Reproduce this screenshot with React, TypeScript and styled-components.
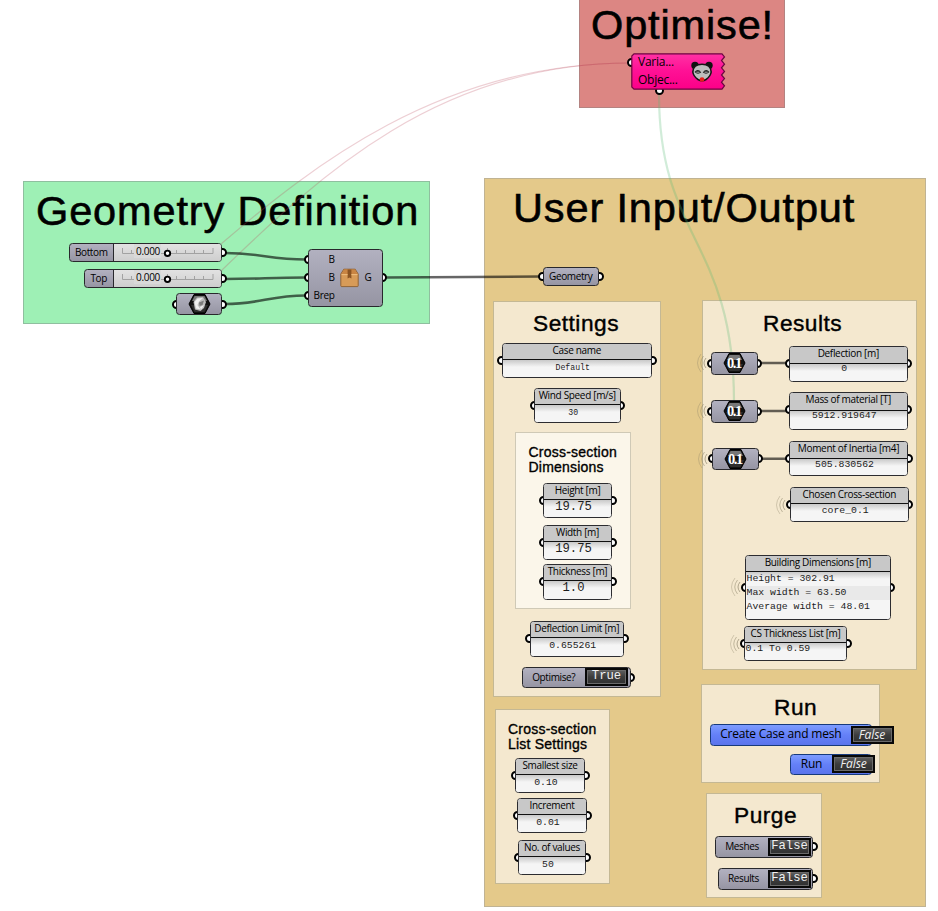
import React from "react";
import styled, { createGlobalStyle, css } from "styled-components";

const GlobalStyle = createGlobalStyle`
  body { margin: 0; background: #fff; overflow: hidden; }
  * { box-sizing: border-box; }
`;

const UI = `"Open Sans", "Noto Sans", sans-serif`;
const MONO = `"Liberation Mono", monospace`;

interface Box { $x: number; $y: number; $w: number; $h: number }
const placed = css<Box>`
  position: absolute;
  left: ${p => p.$x}px;
  top: ${p => p.$y}px;
  width: ${p => p.$w}px;
  height: ${p => p.$h}px;
`;

const Canvas = styled.main`
  position: relative;
  width: 938px;
  height: 911px;
  overflow: hidden;
  background: #fff;
  color: #000;
`;

const Group = styled.section<Box & { $fill: string; $edge: string; $pt: number; $pl: number }>`
  ${placed}
  background: ${p => p.$fill};
  border: 1px solid ${p => p.$edge};
  padding: ${p => p.$pt}px 0 0 ${p => p.$pl}px;
`;

const Heading = styled.h1<{ $gap?: number }>`
  margin: 0;
  font: 400 41.5px/48px "Liberation Sans", Arial, sans-serif;
  letter-spacing: ${p => p.$gap ?? 0.86}px;
  -webkit-text-stroke: 0.6px #000;
  white-space: nowrap;
`;
const SubHeading = styled.h2`
  margin: 0;
  font: 400 22.7px/26px "Liberation Sans", Arial, sans-serif;
  letter-spacing: 0.5px;
  -webkit-text-stroke: 0.4px #000;
  white-space: nowrap;
`;
const SmallHeading = styled.h3`
  margin: 0;
  font: 400 14px/15.3px "Liberation Sans", Arial, sans-serif;
  letter-spacing: 0.22px;
  -webkit-text-stroke: 0.35px #000;
  white-space: pre;
`;

const Wires = styled.svg`
  position: absolute;
  inset: 0;
  pointer-events: none;
`;

const NodeFrame = styled.div<Box>`
  ${placed}
  isolation: isolate;
`;
const Grip = styled.i<{ $side: "left" | "right" | "bottom"; $at: number }>`
  position: absolute;
  z-index: -1;
  width: 9px;
  height: 9px;
  border: 2px solid #000;
  border-radius: 50%;
  background: #fff;
  ${p => p.$side === "bottom"
    ? css`bottom: -4.5px; left: ${p.$at - 4.5}px;`
    : css`top: ${p.$at - 4.5}px; ${p.$side}: -4.5px;`}
`;
const WaveMark = styled.svg<{ $at: number }>`
  position: absolute;
  left: -15px;
  top: ${p => p.$at - 10}px;
  width: 12px;
  height: 20px;
`;
const Waves = ({ at }: { at: number }) => (
  <WaveMark $at={at} viewBox="0 0 12 20" fill="none" stroke="#8a8168" strokeWidth="1">
    <path d="M5 1Q-2 10 5 19" opacity=".35" />
    <path d="M7.5 3Q2 10 7.5 17" opacity=".5" />
    <path d="M10 5Q6 10 10 15" opacity=".65" />
  </WaveMark>
);

const PanelBody = styled.div`
  height: 100%;
  display: flex;
  flex-direction: column;
  border: 1.5px solid #2c2c30;
  border-radius: 3.5px;
  background: #f5f5f5;
  overflow: hidden;
`;
const PanelTitle = styled.div<{ $h: number }>`
  flex: none;
  height: ${p => p.$h}px;
  display: flex;
  justify-content: center;
  background: #c8c8c8;
  border-bottom: 1.5px solid #111;
  font: 400 10px/12.5px ${UI};
  letter-spacing: -0.33px;
  white-space: nowrap;
`;
const PanelValue = styled.div<{ $size: number; $left?: boolean; $row: number }>`
  flex: 1;
  padding: ${p => (p.$left ? "0 0 0 0.5px" : "0 8px 0 0")};
  background: linear-gradient(#c9c9c9, #f5f5f5 7px);
  color: #1c1c1c;
  font: 400 ${p => p.$size}px/${p => p.$row}px ${MONO};
  text-align: ${p => (p.$left ? "left" : "center")};
  white-space: pre;
`;
const PanelLine = styled.div<{ $shade: boolean }>`
  height: 14.2px;
  line-height: 14px;
  background: ${p => (p.$shade ? "#e9e9e9" : "transparent")};
`;

interface PanelProps {
  x: number; y: number; w: number; h: number; title: string; lines: string[];
  head?: number; row?: number; size?: number; left?: boolean; waves?: boolean;
}
const Panel = ({ x, y, w, h, title, lines, head = 16, row = 16, size = 9.8, left, waves }: PanelProps) => {
  const at = h > 50 ? h / 2 : 17.5;
  return (
    <NodeFrame $x={x} $y={y} $w={w} $h={h}>
      {waves && <Waves at={at} />}
      <Grip $side="left" $at={at} />
      <Grip $side="right" $at={at} />
      <PanelBody>
        <PanelTitle $h={head}>{title}</PanelTitle>
        <PanelValue $size={size} $left={left} $row={row}>
          {lines.length > 1
            ? lines.map((l, i) => <PanelLine key={l} $shade={i % 2 === 1}>{l}</PanelLine>)
            : lines[0]}
        </PanelValue>
      </PanelBody>
    </NodeFrame>
  );
};

const Capsule = styled.div<{ $blue?: boolean; $center?: boolean }>`
  height: 100%;
  display: flex;
  align-items: center;
  justify-content: ${p => (p.$center ? "center" : "flex-start")};
  border: 1.5px solid ${p => (p.$blue ? "#173a7c" : "#28282c")};
  border-radius: 3.5px;
  background: ${p => (p.$blue ? "linear-gradient(#7e9cff, #6480f8 50%, #5b74ec)" : "linear-gradient(#b2b1c0, #9695a3)")};
  font: 400 10px/14px ${UI};
  letter-spacing: -0.35px;
  white-space: nowrap;
`;
const Caption = styled.span<{ $w: number; $size?: number }>`
  flex: none;
  width: ${p => p.$w}px;
  padding-bottom: 1.5px;
  text-align: center;
  font-size: ${p => p.$size ?? 10}px;
  letter-spacing: ${p => (p.$size ? -0.2 : -0.38)}px;
`;
const Value = styled.span<{ $italic?: boolean }>`
  flex: none;
  width: 43px;
  height: 18px;
  border: 2px solid #080808;
  box-shadow: inset 0 0 0 1px #6a6a6a;
  background: linear-gradient(#606060, #3c3c3c 50%, #303030);
  color: #f0f0f0;
  text-align: center;
  letter-spacing: 0;
  font: ${p => (p.$italic ? `italic 400 12px/13px ${UI}` : `400 12.2px/13.5px ${MONO}`)};
`;

interface ToggleProps {
  x: number; y: number; w: number; label: string; labelW: number; value: string;
  blue?: boolean; size?: number; grip?: boolean;
}
const Toggle = ({ x, y, w, label, labelW, value, blue, size, grip }: ToggleProps) => (
  <NodeFrame $x={x} $y={y} $w={w} $h={21.5}>
    {grip && <Grip $side="right" $at={10.5} />}
    <Capsule $blue={blue}>
      <Caption $w={labelW} $size={size}>{label}</Caption>
      <Value $italic={blue}>{value}</Value>
    </Capsule>
  </NodeFrame>
);

const HexBody = () => (
  <>
    <path d="M6 1.5H17L22 11L17 20.5H6L1 11Z" fill="#111" stroke="#000" />
    <path d="M6.5 3H16.5L19 8H4Z" fill="#777" />
    <path d="M3 12H20L16.5 19H6.5Z" fill="#2e2e2e" />
  </>
);
const HexText = styled.text`
  font: 700 14.5px "Liberation Serif", serif;
  letter-spacing: -1.4px;
  fill: #fff;
`;
const NumberNode = ({ x, y }: { x: number; y: number }) => (
  <NodeFrame $x={x} $y={y} $w={46.5} $h={22.5}>
    <Waves at={11} />
    <Grip $side="left" $at={11} />
    <Grip $side="right" $at={11} />
    <Capsule $center>
      <svg width="23" height="22" viewBox="0 0 23 22">
        <HexBody />
        <HexText x="4" y="16">0.1</HexText>
      </svg>
    </Capsule>
  </NodeFrame>
);
const BrepNode = () => (
  <NodeFrame $x={176} $y={292.5} $w={46} $h={22.5}>
    <Grip $side="left" $at={11.5} />
    <Grip $side="right" $at={11.5} />
    <Capsule $center>
      <svg width="23" height="22" viewBox="0 0 23 22">
        <HexBody />
        <path d="M5.5 9L9 4.5L15 4L18 9L16 15L12.5 18L7 16.5Z" fill="#bdbdbd" />
        <path d="M6.5 9L9.5 5.5L15 5L11 8.5L9.5 12L12.5 16.5L8 15.5Z" fill="#f0f0f0" />
        <path d="M11 9.5L16 7.5L14.5 12L11.5 13Z" fill="#7c7c7c" />
        <path d="M12 14L16 12L13 16.5Z" fill="#efefef" />
      </svg>
    </Capsule>
  </NodeFrame>
);

const Track = styled.div`
  flex: 1;
  height: 100%;
  position: relative;
  border-left: 1.5px solid #28282c;
  border-radius: 0 2px 2px 0;
  background: linear-gradient(#e2e2e2, #cecece);
`;
const Reading = styled.span`
  position: absolute;
  left: 20.5px;
  top: 0;
  padding: 0 1px 0 2px;
  background: #d9d9d9;
  letter-spacing: -0.3px;
`;
const Rail = styled.svg`
  position: absolute;
  left: 8px;
  top: 2px;
`;
const Slider = ({ x, y, w, label }: { x: number; y: number; w: number; label: string }) => (
  <NodeFrame $x={x} $y={y} $w={w} $h={19}>
    <Grip $side="right" $at={9.5} />
    <Capsule>
      <Caption $w={w - 110.5}>{label}</Caption>
      <Track>
        <Rail width="92" height="14" viewBox="0 0 92 14" fill="none">
          <path d="M0.5 2V7.5H91V2M9.5 4V7M18.5 4V7M27.5 4V7M36.5 4V7M45.5 2V7M54.5 4V7M63.5 4V7M72.5 4V7M81.5 4V7" stroke="#a2a2a2" />
        </Rail>
        <Reading>0.000</Reading>
        <Rail width="92" height="14" viewBox="0 0 92 14">
          <circle cx="45.5" cy="7.3" r="2.7" fill="#fff" stroke="#000" strokeWidth="1.9" />
        </Rail>
      </Track>
    </Capsule>
  </NodeFrame>
);

const Ports = styled.div<{ $w: number; $row: number }>`
  width: ${p => p.$w}px;
  padding-bottom: 2px;
  display: grid;
  grid-auto-rows: ${p => p.$row}px;
  align-items: center;
  text-align: right;
`;
const OutPort = styled.span`
  padding-bottom: 2px;
`;
const BoxIcon = styled.svg`
  margin: 0 6px 0 5px;
`;
const ClusterNode = () => (
  <NodeFrame $x={308} $y={248.5} $w={74.5} $h={58.5}>
    <Grip $side="left" $at={11} />
    <Grip $side="left" $at={29} />
    <Grip $side="left" $at={47} />
    <Grip $side="right" $at={29} />
    <Capsule>
      <Ports $w={25.5} $row={18}><span>B</span><span>B</span><span>Brep</span></Ports>
      <BoxIcon width="19" height="20" viewBox="0 0 19 20">
        <path d="M.8 6L3.8 1.2H15.2L18.2 6V17.8Q18.2 18.6 17.4 18.6H1.6Q.8 18.6 .8 17.8Z" fill="#d79b58" stroke="#8c5c2c" strokeWidth=".9" />
        <path d="M1.5 6L4.2 1.6H14.8L17.5 6Z" fill="#c98543" />
        <path d="M7.6 1.4H11.4V10.5L9.5 9.4L7.6 10.5Z" fill="#8a5423" />
        <path d="M1.5 6.6H7.6M11.4 6.6H17.5" stroke="#efbd7e" />
      </BoxIcon>
      <OutPort>G</OutPort>
    </Capsule>
  </NodeFrame>
);

const TornShape = styled.svg`
  position: absolute;
  inset: 0;
`;
const Solver = styled.div`
  position: relative;
  height: 100%;
  display: flex;
  align-items: center;
  gap: 12px;
  padding-left: 7px;
`;
const SolverPorts = styled.div`
  width: 41px;
  padding-bottom: 1px;
  display: grid;
  grid-auto-rows: 18px;
  align-items: center;
  font: 400 12px/18px ${UI};
  letter-spacing: -0.25px;
  white-space: nowrap;
`;
const SolverNode = () => (
  <NodeFrame $x={631} $y={53} $w={95} $h={37}>
    <Grip $side="left" $at={9.5} />
    <Grip $side="bottom" $at={28} />
    <TornShape width="95" height="37" viewBox="0 0 95 37">
      <defs>
        <linearGradient id="pink" x2="0" y2="1">
          <stop offset="0" stopColor="#ff32a4" />
          <stop offset=".45" stopColor="#ff1296" />
          <stop offset="1" stopColor="#fb0088" />
        </linearGradient>
      </defs>
      <path d="M3 .8H91L93.5 4L90.5 7.5L93.5 11.2L90.5 14.8L93.5 18.4L90.5 22L93.5 25.6L90.5 29.2L93.5 32.8L91 36.2H3L.8 34V3Z" fill="url(#pink)" stroke="#6d0540" strokeWidth="1.2" />
    </TornShape>
    <Solver>
      <SolverPorts><span>Varia...</span><span>Objec...</span></SolverPorts>
      <svg width="22" height="22" viewBox="0 0 22 22">
        <circle cx="4" cy="4.5" r="3.7" fill="#111" />
        <circle cx="18" cy="4.5" r="3.7" fill="#111" />
        <path d="M1.8 11Q2 3.2 11 3.2Q20 3.2 20.2 11Q19.5 15.5 15 18.5Q11 21 7 18.5Q2.5 15.5 1.8 11Z" fill="#bdbdbd" stroke="#151515" strokeWidth="1.6" />
        <path d="M3.5 11Q7 7 10.3 11.5Q6.5 14 3.5 11ZM18.5 11Q15 7 11.7 11.5Q15.5 14 18.5 11Z" fill="#222" />
        <path d="M5.3 11.2H8.5M13.5 11.2H16.7" stroke="#ccc" strokeWidth=".8" />
        <ellipse cx="11" cy="18.5" rx="2.4" ry="2.2" fill="#e3201b" />
      </svg>
    </Solver>
  </NodeFrame>
);

const GeometryNode = () => (
  <NodeFrame $x={542.5} $y={267} $w={56.5} $h={19}>
    <Grip $side="left" $at={9.5} />
    <Grip $side="right" $at={9.5} />
    <Capsule $center><Caption $w={53}>Geometry</Caption></Capsule>
  </NodeFrame>
);

const CREAM = "#f4e8cf";
const CREAM_EDGE = "#c4b894";

export default function App() {
  return (
    <>
      <GlobalStyle />
      <Canvas>
        <Group $x={579} $y={-4} $w={206} $h={112} $fill="#dc8683" $edge="#b48381" $pt={4} $pl={11}>
          <Heading>Optimise!</Heading>
        </Group>
        <Group $x={23} $y={181} $w={407} $h={143} $fill="#9ef0b5" $edge="#8fbf9f" $pt={5} $pl={12}>
          <Heading>Geometry Definition</Heading>
        </Group>
        <Group $x={484} $y={178} $w={442} $h={729} $fill="#e4c98a" $edge="#c0b393" $pt={5} $pl={28}>
          <Heading>User Input/Output</Heading>
        </Group>
        <Group $x={493} $y={301} $w={168} $h={396} $fill={CREAM} $edge={CREAM_EDGE} $pt={8} $pl={39}>
          <SubHeading>Settings</SubHeading>
        </Group>
        <Group $x={515} $y={432} $w={116} $h={177} $fill="#fbf6ea" $edge="#cfc9b6" $pt={12} $pl={12.5}>
          <SmallHeading>{"Cross-section\nDimensions"}</SmallHeading>
        </Group>
        <Group $x={495} $y={709} $w={115} $h={175} $fill={CREAM} $edge={CREAM_EDGE} $pt={12} $pl={12}>
          <SmallHeading>{"Cross-section\nList Settings"}</SmallHeading>
        </Group>
        <Group $x={702} $y={300} $w={215} $h={370} $fill={CREAM} $edge={CREAM_EDGE} $pt={9} $pl={60}>
          <SubHeading>Results</SubHeading>
        </Group>
        <Group $x={701} $y={684} $w={179} $h={99} $fill={CREAM} $edge={CREAM_EDGE} $pt={9} $pl={72}>
          <SubHeading>Run</SubHeading>
        </Group>
        <Group $x={706} $y={793} $w={116} $h={105} $fill={CREAM} $edge={CREAM_EDGE} $pt={8} $pl={27}>
          <SubHeading>Purge</SubHeading>
        </Group>

        <Wires width="938" height="911" viewBox="0 0 938 911" fill="none">
          <g stroke="rgba(185,70,90,.26)" strokeWidth="1.2">
            <path d="M221 244C310 168 440 63 630 63" />
            <path d="M221 271C320 175 440 63 630 63" />
          </g>
          <path d="M659 94C659 240 734 240 734 402" stroke="rgba(90,185,120,.28)" strokeWidth="2.2" />
          <g stroke="rgba(0,0,0,.6)" strokeWidth="2.6">
            <path d="M225 253C260 253 270 259.5 306 259.5" />
            <path d="M225 279C260 279 270 277.5 306 277.5" />
            <path d="M225 304C260 304 270 295.5 306 295.5" />
            <path d="M385 277.5C450 277.5 480 276.5 541 276.5" />
            <path d="M760 363H787M760 411H787M761 458.7H787" />
          </g>
        </Wires>

        <SolverNode />
        <Slider x={69} y={243} w={153} label="Bottom" />
        <Slider x={84} y={269} w={138} label="Top" />
        <BrepNode />
        <ClusterNode />
        <GeometryNode />

        <Panel x={501.5} y={343} w={150.5} h={35} title="Case name" lines={["Default"]} size={8.2} />
        <Panel x={534} y={388} w={86.5} h={35} title="Wind Speed [m/s]" lines={["30"]} size={8.2} />
        <Panel x={543} y={482.5} w={69} h={35} title="Height [m]" lines={["19.75"]} size={12.2} row={14} />
        <Panel x={543} y={524.5} w={69} h={35.5} title="Width [m]" lines={["19.75"]} size={12.2} row={14.5} />
        <Panel x={543} y={564} w={69} h={35.5} title="Thickness [m]" lines={["1.0"]} size={12.2} row={15} />
        <Panel x={529.5} y={621} w={94.5} h={35.5} title="Deflection Limit [m]" lines={["0.655261"]} />
        <Toggle x={521.5} y={666.5} w={109} label="Optimise?" labelW={62.5} value="True" grip />

        <Panel x={515} y={758} w={70} h={35} title="Smallest size" lines={["0.10"]} />
        <Panel x={517} y={798} w={70} h={35} title="Increment" lines={["0.01"]} />
        <Panel x={518} y={840} w={68} h={35} title="No. of values" lines={["50"]} />

        <NumberNode x={711} y={352} />
        <NumberNode x={711} y={400} />
        <NumberNode x={712} y={447.5} />
        <Panel x={789} y={345.5} w={118.5} h={36} head={17} row={10} title="Deflection [m]" lines={["0"]} />
        <Panel x={789} y={392} w={118.5} h={38} head={18} row={9} title="Mass of material [T]" lines={["5912.919647"]} />
        <Panel x={789} y={441} w={119} h={35} head={16.5} row={11} title="Moment of Inertia [m4]" lines={["505.830562"]} />
        <Panel x={790} y={487} w={118.5} h={35} row={13} title="Chosen Cross-section" lines={["core_0.1"]} waves />
        <Panel x={745} y={555} w={145.5} h={64.5} title="Building Dimensions [m]" left waves
          lines={["Height = 302.91", "Max width = 63.50", "Average width = 48.01"]} />
        <Panel x={744} y={626} w={103} h={35} row={12.5} title="CS Thickness List [m]" lines={["0.1 To 0.59"]} left waves />

        <Toggle x={710} y={724} w={161.5} label="Create Case and mesh" labelW={139.5} value="False" size={12} blue />
        <Toggle x={790} y={753.5} w={81.5} label="Run" labelW={41} value="False" size={12} blue />
        <Toggle x={715} y={836} w={98} label="Meshes" labelW={52} value="False" grip />
        <Toggle x={718} y={868} w={95} label="Results" labelW={49} value="False" grip />
      </Canvas>
    </>
  );
}
